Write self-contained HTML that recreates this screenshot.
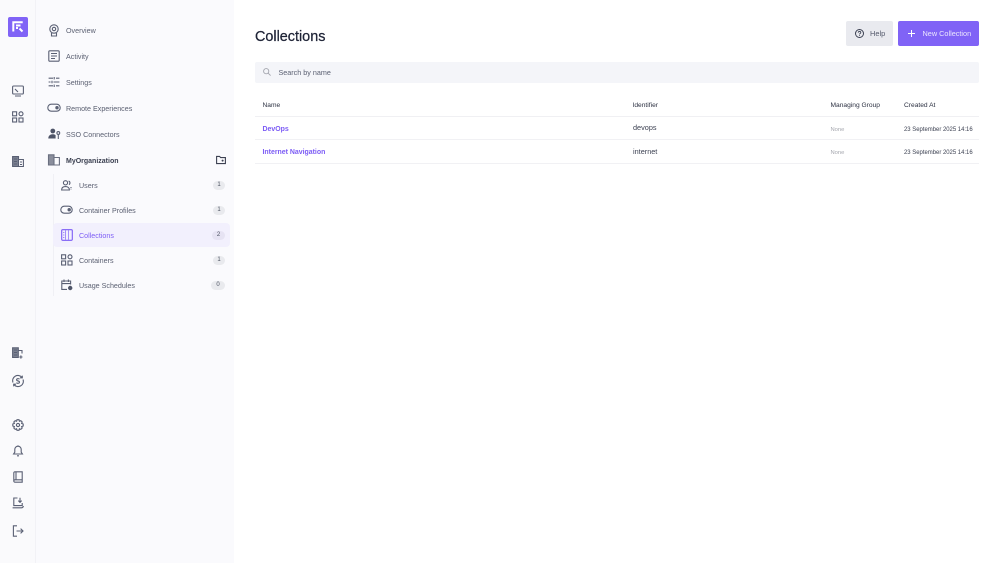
<!DOCTYPE html>
<html><head><meta charset="utf-8"><title>Collections</title>
<style>
html,body{margin:0;padding:0;width:1000px;height:563px;overflow:hidden;background:#fff;font-family:"Liberation Sans",sans-serif;}
.a{position:absolute;white-space:nowrap;line-height:12px;}
#rail{position:absolute;left:0;top:0;width:36px;height:563px;background:#fafafc;border-right:1px solid #f2f2f6;box-sizing:border-box;}
#side{position:absolute;left:36px;top:0;width:198px;height:563px;background:#fafafd;}
.n{font-size:7.15px;color:#5b6072;}
.badge{position:absolute;height:9px;background:#e9eaee;border-radius:5px;font-size:6px;line-height:9px;text-align:center;color:#4b5060;}
svg{position:absolute;fill:none;stroke:#5a6074;stroke-width:1.1;overflow:visible}
.th{font-size:6.65px;color:#2c3142;}
.td{font-size:7.3px;color:#3c4152;}
.link{font-size:6.95px;color:#7c5cf5;font-weight:bold;}
.line{position:absolute;left:255px;width:724px;height:1px;background:#f1f1f4;}
</style></head><body>
<div id="rail"></div><div id="side"></div>

<div style="position:absolute;left:8px;top:17px;width:20px;height:20px;background:#8063f6;border-radius:2px"></div>
<svg style="left:8px;top:17px" width="20" height="20" viewBox="0 0 20 20"><path d="M5.3 14.5V5.3H14.7M8 8.5H12.5M8 11H10M11.5 11.5L14.5 14.5" stroke="#fff" stroke-width="2"/></svg>

<!-- rail icons -->
<svg style="left:12px;top:85px" width="12" height="12" viewBox="0 0 12 12"><rect x=".6" y="1" width="10.8" height="8" rx="1"/><path d="M3 11h6M3 4l3 3" /></svg>
<svg style="left:12px;top:111px" width="12" height="12" viewBox="0 0 12 12"><rect x=".6" y=".8" width="4" height="4"/><circle cx="9" cy="2.8" r="2"/><rect x=".6" y="7" width="4" height="4"/><rect x="7" y="7" width="4" height="4"/></svg>
<svg style="left:12px;top:156px" width="12" height="11" viewBox="0 0 12 11"><path d="M.6 10.5V.6H6.5V10.5Z" fill="#7b8090"/><path d="M6.5 3.5H11.4V10.5H6.5M8 6H10M8 8.5H10M2 3H5M2 5.5H5M2 8H5" stroke-width="1.1"/></svg>
<svg style="left:12px;top:347px" width="12" height="12" viewBox="0 0 12 12"><path d="M.6 10.5V.8H6.3V10.5Z" fill="#7b8090"/><path d="M6.3 3.5H10V6.5M2 3H5M2 5.5H5M2 8H5M8.9 8.4V11.6M7.3 10H10.5" stroke-width="1.1"/></svg>
<svg style="left:12px;top:375px" width="12" height="12" viewBox="0 0 12 12"><path d="M1 7.5A5.2 5.2 0 0 1 10 2.5M11 4.5A5.2 5.2 0 0 1 2 9.5M10.3 .6V2.8H8M1.7 11.4V9.2H4M7.5 4.2C6.5 3.2 4.5 3.6 4.6 4.9C4.7 6.2 7.5 5.7 7.5 7.1C7.5 8.4 5.4 8.7 4.4 7.7"/></svg>
<svg style="left:12px;top:419px" width="12" height="12" viewBox="0 0 12 12"><path d="M5 .7H7L7.4 2.2L8.8 1.6L10.2 3L9.6 4.4L11.2 5V7L9.6 7.6L10.2 9L8.8 10.4L7.4 9.8L7 11.3H5L4.6 9.8L3.2 10.4L1.8 9L2.4 7.6L.8 7V5L2.4 4.4L1.8 3L3.2 1.6L4.6 2.2Z"/><circle cx="6" cy="6" r="1.6"/></svg>
<svg style="left:12px;top:445px" width="12" height="12" viewBox="0 0 12 12"><path d="M1.6 9H10.4L9.2 7.2V4.4A3.2 3.2 0 0 0 2.8 4.4V7.2ZM5 10.8H7M6 .4V1.2"/></svg>
<svg style="left:12px;top:471px" width="12" height="12" viewBox="0 0 12 12"><path d="M1.8 10V2C1.8 1.2 2.3.8 3 .8H10.2V11.2H3C2.3 11.2 1.8 10.8 1.8 10C1.8 9.2 2.3 8.8 3 8.8H10.2M4 .8V8.8"/></svg>
<svg style="left:12px;top:497px" width="12" height="12" viewBox="0 0 12 12"><path d="M5.5 1H1.8V8.6H10.2V6M8 .8V5M6.3 3.6L8 5.3L9.7 3.6M.6 10.8H9.4C10.4 10.8 11.2 10 11.4 9"/></svg>
<svg style="left:12px;top:525px" width="12" height="12" viewBox="0 0 12 12"><path d="M5 .8H1.4V11.2H5M4.5 6H11M8.6 3.6L11 6L8.6 8.4"/></svg>

<!-- nav icons -->
<svg style="left:48px;top:24px" width="12" height="13" viewBox="0 0 12 13"><circle cx="6" cy="5" r="4.2"/><circle cx="6" cy="5" r="1.7"/><path d="M3.5 9V12H8.5V9"/></svg>
<svg style="left:48px;top:50px" width="12" height="12" viewBox="0 0 12 12"><rect x=".8" y=".8" width="10.4" height="10.4" rx="1"/><path d="M3 3.5H9M3 6H9M3 8.5H7"/></svg>
<svg style="left:48px;top:76px" width="12" height="12" viewBox="0 0 12 12"><path d="M.6 2.2H5M8 2.2H11.4M.6 6H2.5M5.5 6H11.4M.6 9.8H5M8 9.8H11.4M6.2 1V3.4M4 4.8V7.2M6.2 8.6V11"/></svg>
<svg style="left:47px;top:103px" width="14" height="10" viewBox="0 0 14 10"><rect x=".8" y="1.2" width="12.4" height="7" rx="3.5"/><circle cx="10" cy="4.7" r="1.7" fill="#5a6074" stroke="none"/></svg>
<svg style="left:48px;top:128px" width="13" height="12" viewBox="0 0 13 12"><circle cx="4.8" cy="3" r="2.4" fill="#4e5468" stroke="none"/><path d="M.3 10.5C.3 7.5 2.5 6.3 4.8 6.3C6 6.3 7 6.6 7.6 7.2V10.5Z" fill="#4e5468" stroke="none"/><circle cx="10.3" cy="5" r="1.4"/><path d="M10.3 6.5V11"/></svg>
<svg style="left:48px;top:154px" width="12" height="12" viewBox="0 0 12 12"><path d="M.5 11V.8H6V11Z" fill="#8a8e9c" stroke="#6a6f80"/><path d="M6 3.5H11.4V11H6" stroke="#6a6f80"/></svg>
<svg style="left:216px;top:155px" width="10" height="10" viewBox="0 0 10 10"><path d="M.6 8.6V1.4H3.6L4.6 2.6H9.4V8.6Z" stroke="#3c4152"/><circle cx="6.6" cy="5.6" r="1" fill="#3c4152" stroke="none"/></svg>

<div style="position:absolute;left:53px;top:174px;width:1px;height:122px;background:#f0f0f5"></div>
<div style="position:absolute;left:53px;top:223px;width:177px;height:24px;background:#f2f0fd;border-radius:4px"></div>

<svg style="left:61px;top:180px" width="12" height="11" viewBox="0 0 12 11"><circle cx="4.5" cy="2.8" r="2.1"/><path d="M.6 10C.6 7.6 2.3 6.6 4.5 6.6C6.7 6.6 8.4 7.6 8.4 10ZM7.6 1A2 2 0 0 1 8 4.6M10 7V8.2M10 9.6V10"/></svg>
<svg style="left:60px;top:205px" width="13" height="10" viewBox="0 0 13 10"><rect x=".8" y="1.2" width="11.4" height="7" rx="3.5"/><circle cx="9.2" cy="4.7" r="1.7" fill="#5a6074" stroke="none"/></svg>
<svg style="left:61px;top:229px" width="12" height="12" viewBox="0 0 12 12"><rect x=".7" y=".7" width="10.6" height="10.6" rx="1" stroke="#7c5cf5"/><path d="M4.5 1V11M7.5 1V11M2 3.5H3.4M2 6H3.4M2 8.5H3.4" stroke="#a48ff8" stroke-width="1"/></svg>
<svg style="left:61px;top:254px" width="12" height="12" viewBox="0 0 12 12"><rect x=".6" y=".8" width="4" height="4"/><circle cx="9" cy="2.8" r="2"/><rect x=".6" y="7" width="4" height="4"/><rect x="7" y="7" width="4" height="4"/></svg>
<svg style="left:61px;top:279px" width="12" height="12" viewBox="0 0 12 12"><path d="M6 10.4H.8V2H9.6V5.5M.8 4.6H9.6M3 .5V3M7.4 .5V3"/><circle cx="9.2" cy="9" r="2.2" fill="#4e5468" stroke="none"/></svg>

<div class="a n" style="left:66px;top:24.5px">Overview</div>
<div class="a n" style="left:66px;top:50.5px">Activity</div>
<div class="a n" style="left:66px;top:76.5px">Settings</div>
<div class="a n" style="left:66px;top:102.5px">Remote Experiences</div>
<div class="a n" style="left:66px;top:128.5px">SSO Connectors</div>
<div class="a n" style="left:66px;top:156px;color:#3a3f50;font-weight:bold;font-size:7px">MyOrganization</div>
<div class="a n" style="left:79px;top:179.5px">Users</div>
<div class="a n" style="left:79px;top:204.5px">Container Profiles</div>
<div class="a n" style="left:79px;top:229.5px;color:#7c5cf5">Collections</div>
<div class="a n" style="left:79px;top:254.5px">Containers</div>
<div class="a n" style="left:79px;top:279.5px">Usage Schedules</div>

<div class="badge" style="left:213px;top:181px;width:12px">1</div>
<div class="badge" style="left:213px;top:206px;width:12px">1</div>
<div class="badge" style="left:212px;top:231px;width:13px;background:#e6e3f3">2</div>
<div class="badge" style="left:213px;top:256px;width:12px">1</div>
<div class="badge" style="left:211px;top:281px;width:14px">0</div>

<!-- header -->
<div class="a" style="left:255px;top:29px;line-height:17px;font-size:14.4px;color:#1e2336;-webkit-text-stroke:.25px #1e2336">Collections</div>
<div style="position:absolute;left:846px;top:21px;width:47px;height:25px;background:#e9eaef;border-radius:2px"></div>
<svg style="left:855px;top:29px" width="9" height="9" viewBox="0 0 9 9"><circle cx="4.5" cy="4.5" r="4" stroke="#3c4152" stroke-width="1"/><path d="M3.2 3.6C3.2 2 5.8 2 5.8 3.5C5.8 4.5 4.5 4.4 4.5 5.4M4.5 6.3V7" stroke="#3c4152" stroke-width=".9"/></svg>
<div class="a" style="left:870px;top:28px;font-size:7.4px;color:#555a6c">Help</div>
<div style="position:absolute;left:898px;top:21px;width:81px;height:25px;background:#8063f6;border-radius:2px"></div>
<svg style="left:908px;top:30px" width="7" height="7" viewBox="0 0 7 7"><path d="M3.5 0V7M0 3.5H7" stroke="#fff" stroke-width="1"/></svg>
<div class="a" style="left:922.5px;top:28px;font-size:7.3px;color:#ece8fe">New Collection</div>

<!-- search -->
<div style="position:absolute;left:255px;top:62px;width:724px;height:21px;background:#f4f5f9;border-radius:2px"></div>
<svg style="left:263px;top:68px" width="8" height="8" viewBox="0 0 8 8"><circle cx="3.2" cy="3.2" r="2.6" stroke="#a3a5ae" stroke-width=".9"/><path d="M5.2 5.2L7.6 7.6" stroke="#a3a5ae" stroke-width=".9"/></svg>
<div class="a" style="left:278.5px;top:67px;font-size:7.2px;color:#5b6072">Search by name</div>

<!-- table -->
<div class="a th" style="left:262.5px;top:100px">Name</div>
<div class="a th" style="left:632.5px;top:100px">Identifier</div>
<div class="a th" style="left:830.5px;top:100px">Managing Group</div>
<div class="a th" style="left:904px;top:100px">Created At</div>
<div class="line" style="top:115.5px;background:#f0f0f3"></div>
<div class="a link" style="left:262.5px;top:124px">DevOps</div>
<div class="a td" style="left:633px;top:122px">devops</div>
<div class="a" style="left:830.5px;top:124px;font-size:5.8px;color:#a5a7ae">None</div>
<div class="a" style="left:904px;top:124px;font-size:5.95px;color:#3c4152">23 September 2025 14:16</div>
<div class="line" style="top:139px"></div>
<div class="a link" style="left:262.5px;top:147px">Internet Navigation</div>
<div class="a td" style="left:633px;top:145.5px">internet</div>
<div class="a" style="left:830.5px;top:147px;font-size:5.8px;color:#a5a7ae">None</div>
<div class="a" style="left:904px;top:147px;font-size:5.95px;color:#3c4152">23 September 2025 14:16</div>
<div class="line" style="top:162.5px"></div>
</body></html>
